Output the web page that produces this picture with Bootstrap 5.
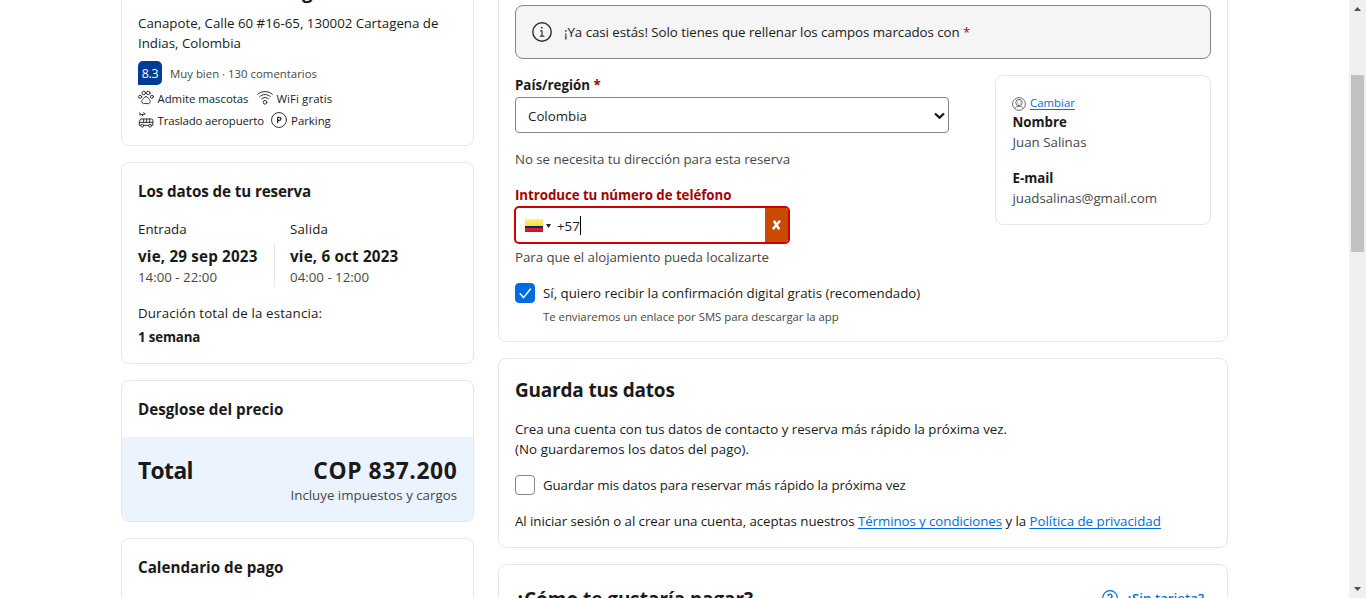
<!DOCTYPE html>
<html lang="es">
<head>
<meta charset="utf-8">
<meta name="viewport" content="width=device-width, initial-scale=1">
<title>Tus datos</title>
<link rel="stylesheet" href="https://cdn.jsdelivr.net/npm/bootstrap@5.3.0/dist/css/bootstrap.min.css">
<style>
body{font:400 13.3px/20px "Open Sans","Noto Sans",sans-serif;color:#1a1a1a;height:598px;overflow:hidden;background:#fff}
.page{width:1107px;gap:24px}
.side{width:353px}
.main{width:730px}
.panel{border:1px solid #e7e7e7;border-radius:8px;background:#fff;padding:16px;flex-shrink:0}
.side,.main{gap:16px}
.first-side{margin-top:-38px;height:184px;padding-top:17px}
.cut-title{font:700 19px/28px "Open Sans",sans-serif;margin-left:164px;margin-top:-3px;margin-bottom:8px}
.t12{font-size:11.4px;line-height:18px}
.t16{font-size:15.2px;line-height:24px;font-weight:700}
.t20{font-size:19px;line-height:28px;font-weight:700;letter-spacing:-.2px}
.t24{font-size:22.8px;line-height:32px;font-weight:700;letter-spacing:-.6px;position:relative;top:1.5px}
.b{font-weight:700}
.m{font-weight:500}
.mid{color:#474747}
.score{width:24px;height:24px;background:#003b95;color:#fff;border-radius:5px 5px 5px 0;font-size:12.4px;font-weight:500;letter-spacing:-.3px;padding-top:1px}
.ic{flex-shrink:0;fill:none;stroke:#333;stroke-width:1.5;stroke-linecap:round;stroke-linejoin:round}
.amen{height:22px;letter-spacing:-.03px}
.amen .ic{margin-top:-2px}
.amen-first{margin-top:3px}
.tight{letter-spacing:-.05px}
.head-t{letter-spacing:-.12px}
.date{letter-spacing:.18px;line-height:23px}
.out{margin-left:16px;padding-left:15.5px;border-left:1px solid #e7e7e7;height:44px;margin-top:4px}
.sal{letter-spacing:.2px;margin-left:32.5px}
.total{background:#ebf3ff;margin:16px -16px -16px;padding:16px;border-radius:0 0 7px 7px;height:84px}
.sum{letter-spacing:.58px;margin-right:-.3px}
.first-main{margin-top:-28px;height:370px;padding-top:32px}
.note{height:54px;background:#f5f5f5;border:1px solid #868686;border-radius:8px;padding:0 16px;gap:12px;letter-spacing:-.04px}
.red{color:#c00}
.dred{color:#a30000}
.form-col{width:434px}
.sel.form-select{height:36px;border:1px solid #868686;border-radius:4px;padding:2px 12px 0;font-size:13.3px;color:#1a1a1a;background-size:0;line-height:20px}
.sel-box{position:relative}
.sel-box svg{position:absolute;right:4px;top:15px}
.phone{width:276px;height:38px;border:2px solid #c00;border-radius:5px;margin:1px 0 3px -1px;overflow:hidden}
.dial{margin:1px 0 0 2px;letter-spacing:0}
.bad{width:23px;background:#c94a00}
.caret{width:1px;height:19px;background:#000}
.flag{width:18px;height:13px;margin-left:9px;background:linear-gradient(#faf08a,#f5e52e 50%,#0d2c80 50%,#0a1f5c 72%,#d8203a 72%,#c8102e)}
.chk.form-check-input{width:20px;height:20px;border:1px solid #868686;border-radius:4px;margin:0;flex-shrink:0}
.chk.form-check-input:checked{background-color:#006ce4;border-color:#006ce4;background-size:0}
.chk-box{position:relative}
.chk-box svg{position:absolute;left:4px;top:5px}
.who{width:216px;height:150px;margin-top:16px;padding-left:16.5px}
.lnk{color:#006ce4;text-decoration:underline;text-underline-offset:2px;text-decoration-thickness:1px;text-decoration-skip-ink:none}
.long{letter-spacing:-.03px}
.bar{width:17px;background:#f0f0f0;padding:0 2px}
.thumb{height:177px;background:#c1c1c1;margin-top:60px}
.gap16{margin-top:16px}
.card-help{color:#006ce4;padding-top:5px}
.card-help span{font-weight:600;margin-left:8px;letter-spacing:0;margin-top:-2px}
</style>
<script src="https://cdn.jsdelivr.net/npm/bootstrap@5.3.0/dist/js/bootstrap.bundle.min.js"></script>
</head>
<body class="d-flex">
<div class="flex-grow-1 d-flex justify-content-center overflow-hidden">
<div class="page d-flex align-items-start">
  <aside class="side d-flex flex-column">
    <section class="panel first-side">
      <div class="cut-title">g</div>
      <div>Canapote, Calle 60 #16-65, 130002 Cartagena de<br>Indias, Colombia</div>
      <div class="d-flex align-items-center gap-2 mt-2">
        <span class="score d-flex align-items-center justify-content-center">8.3</span>
        <span class="t12 mid" style="padding-top:1px">Muy bien · 130 comentarios</span>
      </div>
      <div class="amen amen-first t12 d-flex align-items-center">
        <svg class="ic" width="16" height="16" viewBox="0 0 24 24"><circle cx="8.6" cy="4.4" r="2.7"/><circle cx="15.4" cy="4.4" r="2.7"/><circle cx="3.2" cy="10.2" r="2.3"/><circle cx="20.8" cy="10.2" r="2.3"/><path d="M12 10c-2 0-3 1.400-3.700 2.600-.8 1.300-2.500 2-2.500 4.400 0 2.100 1.300 3.600 3 3.600 1.300 0 2-.7 3.200-.7s1.900.7 3.200.7c1.700 0 3-1.500 3-3.600 0-2.400-1.700-3.100-2.500-4.400C15 11.400 14 10 12 10z"/></svg>
        <span style="margin:0 8px 0 3.500px">Admite mascotas</span>
        <svg class="ic" width="16" height="16" viewBox="0 0 24 24"><path d="M1 6.500C7 .8 17 .8 23 6.500M3.800 10c4.700-4.300 11.700-4.300 16.400 0M6.800 13.300c3-2.700 7.400-2.700 10.400 0"/><circle cx="12" cy="18.500" r="2.800"/></svg>
        <span style="margin-left:4px;letter-spacing:.1px">WiFi gratis</span>
      </div>
      <div class="amen t12 d-flex align-items-center">
        <svg class="ic" width="16" height="16" viewBox="0 0 24 24"><path d="M2.500 1.200l2 2.500M2.500 4.200l8.500-1.200-2.500-2M8 3.500 6.500 6"/><path d="M4 20H2v-5.500L4 10.500h16.500a1.800 1.800 0 0 1 1.800 1.800V20h-2M9 20h6.500M2 15.500h20M8.500 10.500v5M13 10.500v5M17.500 10.500v5"/><circle cx="6.500" cy="20.500" r="2.200"/><circle cx="18" cy="20.500" r="2.200"/></svg>
        <span style="margin:0 6.500px 0 3.500px;letter-spacing:-.12px">Traslado aeropuerto</span>
        <svg class="ic" width="16" height="16" viewBox="0 0 24 24"><circle cx="12" cy="12" r="11.200"/><path d="M10 16V8h2.500a2.300 2.300 0 0 1 0 4.600H10" stroke-width="2"/></svg>
        <span style="margin-left:4.500px;letter-spacing:-.02px">Parking</span>
      </div>
    </section>

    <section class="panel">
      <h2 class="t16 head-t m-0">Los datos de tu reserva</h2>
      <div class="d-flex gap16">
        <div><div class="m">Entrada</div><div class="t16 date" style="margin-top:5.500px;margin-bottom:-.5px">vie, 29 sep 2023</div><div class="mid">14:00 - 22:00</div></div>
        <div class="d-flex flex-column">
          <div class="m sal">Salida</div>
          <div class="out"><div class="t16 date" style="margin-top:1.500px;margin-bottom:-.5px">vie, 6 oct 2023</div><div class="mid">04:00 - 12:00</div></div>
        </div>
      </div>
      <div class="m gap16" style="letter-spacing:.15px">Duración total de la estancia:</div>
      <div class="b mt-1" style="letter-spacing:-.15px">1 semana</div>
    </section>

    <section class="panel">
      <h2 class="t16 m-0">Desglose del precio</h2>
      <div class="total d-flex justify-content-between">
        <div class="t24">Total</div>
        <div class="text-end"><div class="t24 sum">COP 837.200</div><div class="mid">Incluye impuestos y cargos</div></div>
      </div>
    </section>

    <section class="panel" style="height:120px">
      <h2 class="t16 m-0">Calendario de pago</h2>
    </section>
  </aside>

  <main class="main d-flex flex-column">
    <section class="panel first-main">
      <div class="note d-flex align-items-center">
        <svg class="ic" width="20" height="20" viewBox="0 0 20 20"><circle cx="10" cy="10" r="9.200"/><path d="M8.500 8.800H10v5.400M8.300 14.200h3.500" style="stroke-width:1.200"/><circle cx="9.700" cy="5.800" r=".4" fill="#333" style="stroke-width:1"/></svg>
        <span>¡Ya casi estás! Solo tienes que rellenar los campos marcados con <span class="red">*</span></span>
      </div>
      <div class="d-flex justify-content-between">
        <div class="form-col gap16">
          <label class="b d-block" for="pais" style="margin-bottom:2px">País/región <span class="dred">*</span></label>
          <div class="sel-box">
            <select id="pais" class="form-select sel"><option>Colombia</option></select>
            <svg width="11" height="8" viewBox="0 0 11 8" fill="none" stroke="#1a1a1a" stroke-width="2.300"><path d="M1 1.500l4.500 4.200L10 1.500"/></svg>
          </div>
          <div class="mid tight gap16">No se necesita tu dirección para esta reserva</div>
          <label class="b dred d-block gap16" style="letter-spacing:-.06px">Introduce tu número de teléfono</label>
          <div class="phone d-flex align-items-center">
            <span class="flag"></span>
            <svg style="margin:2px 4px 0 3px" width="5" height="4" viewBox="0 0 5 4"><path d="M0 0h5L2.500 4z" fill="#222"/></svg>
            <span class="dial">+57</span><span class="caret"></span>
            <span class="bad ms-auto h-100 d-flex align-items-center justify-content-center"><svg width="9" height="10" viewBox="0 0 9 10" stroke="#fff" stroke-width="2.500"><path d="M1.800.8 7.200 9.200M8 .8.8 9.200"/></svg></span>
          </div>
          <div class="mid tight">Para que el alojamiento pueda localizarte</div>
          <div class="d-flex gap-2 chk-box gap16">
            <input class="form-check-input chk" type="checkbox" checked>
            <svg width="13" height="11" viewBox="0 0 13 11" fill="none" stroke="#fff" stroke-width="1.500" stroke-linecap="round" stroke-linejoin="round"><path d="M1.200 5.800l3.300 3.800L11.500 1"/></svg>
            <div class="text-nowrap">Sí, quiero recibir la confirmación digital gratis (recomendado)<div class="t12 mid long" style="margin-top:5px">Te enviaremos un enlace por SMS para descargar la app</div></div>
          </div>
        </div>
        <div class="panel who">
          <div class="d-flex align-items-center" style="margin-top:1px;height:20px">
            <svg style="margin-left:-.5px;margin-right:4px;margin-top:1px" width="14" height="14" viewBox="0 0 24 24" fill="none" stroke="#6b6b6b" stroke-width="1.700"><circle cx="12" cy="12" r="11"/><circle cx="12" cy="9.500" r="5.500"/><circle cx="12" cy="9.500" r="3" stroke-width=".6"/><path d="M4.500 20c1.500-3 4-4 7.500-4s6 1 7.500 4"/></svg>
            <a class="lnk t12" href="#">Cambiar</a>
          </div>
          <div class="b" style="margin-top:-1px">Nombre</div>
          <div class="mid">Juan Salinas</div>
          <div class="b gap16">E-mail</div>
          <div class="mid long">juadsalinas@gmail.com</div>
        </div>
      </div>
    </section>

    <section class="panel" style="height:190px">
      <h2 class="t20 mb-0" style="margin-top:1px">Guarda tus datos</h2>
      <div class="long" style="margin-top:15px">Crea una cuenta con tus datos de contacto y reserva más rápido la próxima vez.</div>
      <div style="letter-spacing:.06px">(No guardaremos los datos del pago).</div>
      <div class="d-flex gap-2 gap16">
        <input class="form-check-input chk" type="checkbox">
        <span style="letter-spacing:-.1px">Guardar mis datos para reservar más rápido la próxima vez</span>
      </div>
      <div class="gap16" style="letter-spacing:-.055px">Al iniciar sesión o al crear una cuenta, aceptas nuestros <a class="lnk" href="#" style="letter-spacing:-.07px">Términos y condiciones</a> y la <a class="lnk" href="#" style="letter-spacing:0">Política de privacidad</a></div>
    </section>

    <section class="panel" style="height:110px">
      <div class="d-flex justify-content-between" style="padding-top:4px;padding-right:7px">
        <h2 class="t20 m-0" style="letter-spacing:-.05px">¿Cómo te gustaría pagar?</h2>
        <a class="d-flex text-decoration-none card-help" href="#">
          <svg width="16" height="16" viewBox="0 0 16 16" fill="none" stroke="#006ce4" stroke-width="1.100"><circle cx="8" cy="8" r="7.400"/><path d="M6 6.200a2 2 0 1 1 3 1.700c-.7.4-1 .8-1 1.600M8 11v1" stroke-width="1.300"/></svg>
          <span>¿Sin tarjeta?</span>
        </a>
      </div>
    </section>
  </main>
</div>
</div>
<div class="bar d-flex flex-column align-items-stretch flex-shrink-0">
  <svg class="mx-auto" width="7" height="4" viewBox="0 0 7 4" style="margin-top:7px;margin-bottom:4px"><path d="M0 4 3.500 0 7 4z" fill="#505050"/></svg>
  <div class="thumb"></div>
  <svg class="mx-auto mt-auto" width="7" height="4" viewBox="0 0 7 4" style="margin-bottom:7px"><path d="M0 0h7L3.500 4z" fill="#505050"/></svg>
</div>
</body>
</html>
